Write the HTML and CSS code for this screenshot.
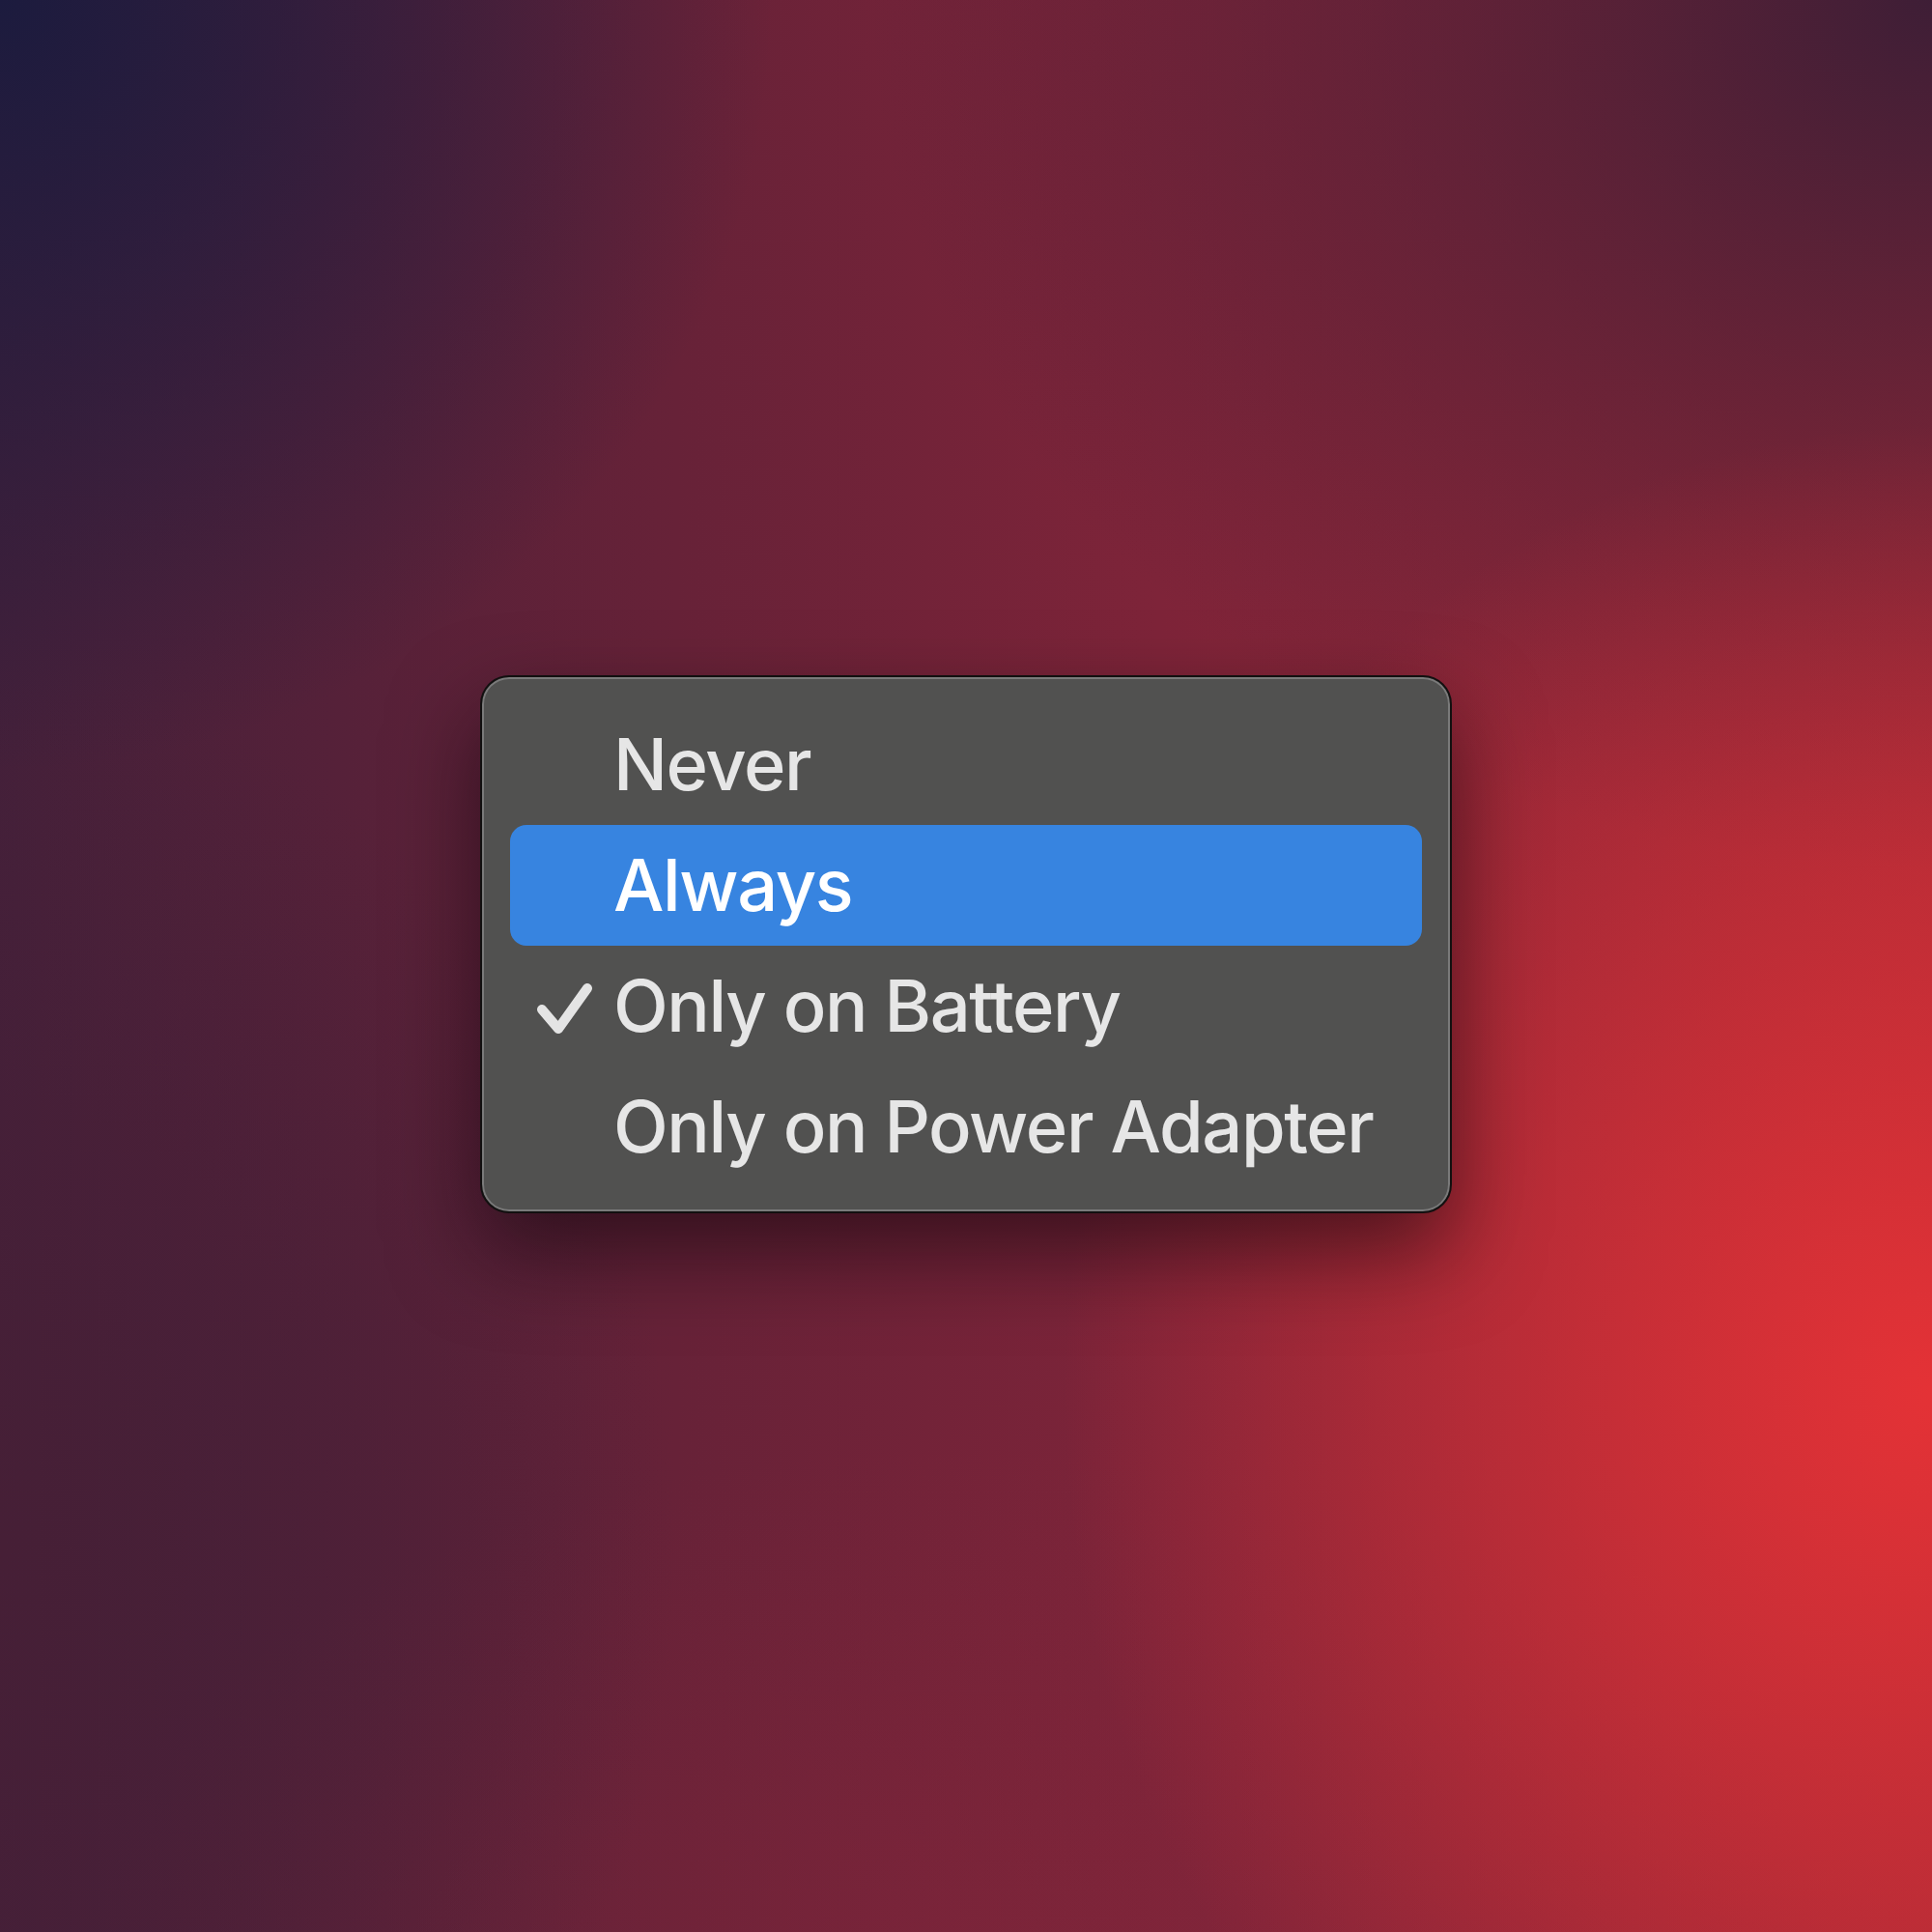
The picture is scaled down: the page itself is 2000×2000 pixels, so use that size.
FILE: index.html
```html
<!DOCTYPE html>
<html lang="en">
<head>
<meta charset="utf-8">
<title>Menu</title>
<link rel="stylesheet" href="styles.css">
</head>
<body>
<div class="stage">
  <div class="menu">
    <div class="item"><span class="mark"></span><span class="label">Never</span></div>
    <div class="item selected"><span class="mark"></span><span class="label">Always</span></div>
    <div class="item"><span class="mark"><svg width="60" height="64" viewBox="0 0 60 64"><path d="M6 37 L23 57 L53 15" fill="none" stroke="#e4e4e4" stroke-width="10" stroke-linecap="round" stroke-linejoin="round"/></svg></span><span class="label">Only on Battery</span></div>
    <div class="item"><span class="mark"></span><span class="label">Only on Power Adapter</span></div>
  </div>
</div>
</body>
</html>
```
FILE: styles.css
```css
html, body {
  margin: 0;
  padding: 0;
}
body {
  width: 2000px;
  height: 2000px;
  overflow: hidden;
  font-family: Inter, "Open Sans", sans-serif;
  background:
    radial-gradient(ellipse 900px 1000px at 100% 72%, rgba(228,50,54,1) 0%, rgba(228,50,54,0.6) 40%, rgba(228,50,54,0) 100%),
    radial-gradient(ellipse 800px 800px at 0% 0%, rgba(28,27,62,1) 0%, rgba(28,27,62,0) 100%),
    radial-gradient(ellipse 1100px 900px at 100% 0%, rgba(62,30,54,1) 0%, rgba(62,30,54,0.55) 45%, rgba(62,30,54,0) 100%),
    radial-gradient(ellipse 700px 900px at 0% 80%, rgba(70,31,54,1) 0%, rgba(70,31,54,0) 100%),
    radial-gradient(ellipse 900px 500px at 50% 100%, rgba(128,37,58,0.5) 0%, rgba(128,37,58,0) 100%),
    linear-gradient(90deg, #44203a 0%, #672238 35%, #7e2439 60%, #9e2937 100%);
}
.stage {
  padding: 699px 0 0 497px;
}
.menu {
  box-sizing: border-box;
  width: 1006px;
  height: 557px;
  padding: 28px 29px;
  background: #515150;
  border: 2px solid #121010;
  border-radius: 30px;
  box-shadow:
    inset 0 0 0 2px #7a7a7a,
    0 40px 90px rgba(10,4,10,0.55);
  display: flex;
  flex-direction: column;
}
.item {
  height: 125px;
  display: flex;
  align-items: center;
  border-radius: 17px;
  color: #e6e6e6;
  font-size: 74px;
  font-weight: 500;
  letter-spacing: -1.4px;
  line-height: 125px;
}
.item.selected {
  background: #3784e0;
  color: #ffffff;
}
.mark {
  width: 107px;
  flex: none;
  display: flex;
  justify-content: flex-start;
  padding-left: 27px;
  box-sizing: border-box;
}
.mark svg {
  display: block;
  margin-top: -4px;
}
.label {
  white-space: nowrap;
}
```
